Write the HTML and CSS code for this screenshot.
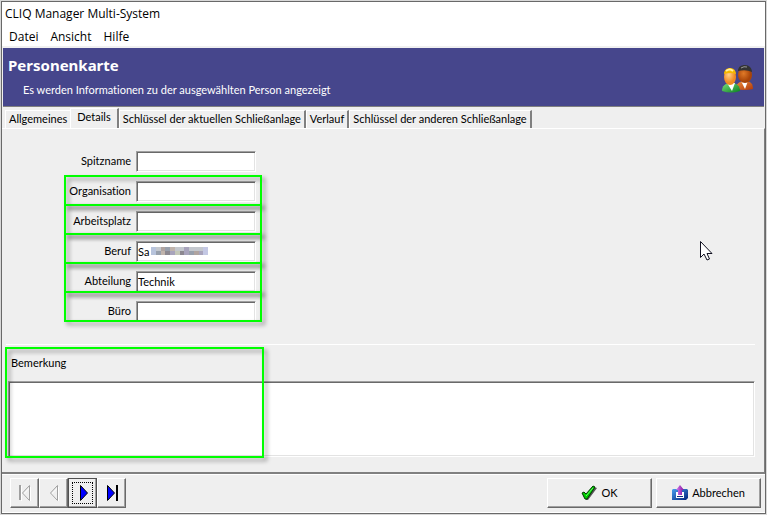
FILE: index.html
```html
<!DOCTYPE html>
<html lang="de">
<head>
    <meta charset="UTF-8">
    <meta name="viewport" content="width=device-width, initial-scale=1.0">
    <title>CLIQ Manager Multi-System</title>
    <link rel="stylesheet" href="styles.css">
</head>
<body>

<div class="window">
    <div class="title-bar">CLIQ Manager Multi-System</div>
    <nav class="menu-bar">
        <button type="button">Datei</button>
        <button type="button">Ansicht</button>
        <button type="button">Hilfe</button>
    </nav>

    <header class="banner">
        <div>
            <h1>Personenkarte</h1>
            <p>Es werden Informationen zu der ausgewählten Person angezeigt</p>
        </div>
        <svg class="people-icon" width="32" height="28" viewBox="0 0 32 28">
            <defs>
                <radialGradient id="skin" cx=".4" cy=".35"><stop offset="0" stop-color="#ffd08a"/><stop offset="1" stop-color="#f08a20"/></radialGradient>
                <radialGradient id="tan" cx=".4" cy=".4"><stop offset="0" stop-color="#e07a28"/><stop offset="1" stop-color="#a84408"/></radialGradient>
                <linearGradient id="green" x2="1" y2="1"><stop offset="0" stop-color="#7ce07c"/><stop offset="1" stop-color="#088020"/></linearGradient>
                <linearGradient id="orange" x2="1" y2="1"><stop offset="0" stop-color="#f09040"/><stop offset="1" stop-color="#b03808"/></linearGradient>
            </defs>
            <path d="M14 24c0-5 3-8 9-8s8 3 8 8q-8 2-17 0z" fill="url(#orange)"/>
            <path d="M19 16h7l-3 8z" fill="#fff"/>
            <ellipse cx="23" cy="10" rx="7" ry="8" fill="url(#tan)"/>
            <path d="M16 6c0-4 3-6 7-6s7 3 7 7q-6-3-14-1z" fill="#333"/>
            <path d="M19 3q3-2 6-1" stroke="#999" fill="none"/>
            <path d="M0 26c0-5 3-8 9-8s9 3 9 8q-9 3-18 0z" fill="url(#green)"/>
            <path d="M5 18h8l-3 8z" fill="#fff"/>
            <ellipse cx="8" cy="12" rx="6" ry="8" fill="url(#skin)"/>
            <path d="M2 9c0-4 3-6 6-6s6 2 6 6q-6-2-12 0z" fill="#f4b800"/>
            <path d="M4 6q4-3 7 0" stroke="#fff0a0" stroke-width="2" fill="none"/>
        </svg>
    </header>

    <div class="tabs" role="tablist">
        <button type="button" class="tab" role="tab">Allgemeines</button>
        <button type="button" class="tab active" role="tab" aria-selected="true">Details</button>
        <button type="button" class="tab" role="tab">Schlüssel der aktuellen Schließanlage</button>
        <button type="button" class="tab" role="tab">Verlauf</button>
        <button type="button" class="tab" role="tab">Schlüssel der anderen Schließanlage</button>
    </div>

    <main class="panel">
        <!-- Personal details -->
        <div class="fields">
            <div class="field">
                <label for="nickname">Spitzname</label>
                <input type="text" id="nickname">
            </div>
            <div class="field">
                <label for="organisation">Organisation</label>
                <input type="text" id="organisation">
            </div>
            <div class="field">
                <label for="workplace">Arbeitsplatz</label>
                <input type="text" id="workplace">
            </div>
            <div class="field">
                <label for="job">Beruf</label>
                <input type="text" id="job" value="Sa">
                <svg class="mosaic" width="57" height="8" viewBox="0 0 12 2" preserveAspectRatio="none" shape-rendering="crispEdges">
                    <path fill="#b8c4dc" d="M0 0h1v2H0z"/>
                    <path fill="#c4c8ce" d="M1 0h1v1H1zM5 0h2v1H5zM8 0h3v1H8z"/>
                    <path fill="#b0a4a0" d="M2 0h1v1H2zM9 1h1v1H9z"/>
                    <path fill="#98a0ac" d="M3 0h1v1H3zM1 1h1v1H1zM8 1h1v1H8z"/>
                    <path fill="#c0b4ac" d="M4 0h1v1H4zM2 1h1v1H2z"/>
                    <path fill="#8c8890" d="M3 1h1v1H3zM6 1h1v1H6z"/>
                    <path fill="#a8a4bc" d="M4 1h1v1H4zM7 0h1v2H7zM10 1h1v1h-1z"/>
                    <path fill="#c4c8b8" d="M5 1h1v1H5z"/>
                    <path fill="#c4c8e4" d="M11 0h1v2h-1z"/>
                </svg>
            </div>
            <div class="field">
                <label for="department">Abteilung</label>
                <input type="text" id="department" value="Technik">
            </div>
            <div class="field">
                <label for="office">Büro</label>
                <input type="text" id="office">
            </div>
            <!-- Green frames over the last five fields -->
            <div class="frames">
                <span class="frame"></span>
                <span class="frame"></span>
                <span class="frame"></span>
                <span class="frame"></span>
                <span class="frame"></span>
            </div>
        </div>

        <!-- Remarks -->
        <div class="remarks">
            <label for="remark">Bemerkung</label>
            <textarea id="remark"></textarea>
            <span class="frame remarks-frame"></span>
        </div>

        <svg class="pointer" width="13" height="20" viewBox="0 0 13 20">
            <path d="M.5 .5v16l3.500-3.500 3 6 2.500-1-2.500-5.500h5z" fill="#fff" stroke="#101020"/>
        </svg>
    </main>

    <footer class="footer">
        <div class="record-nav">
            <button type="button" aria-label="Erster" disabled>
                <svg width="16" height="18" viewBox="0 0 16 18"><path d="M4.500 2v15M13.500 3v14l-7-7z" stroke="#fff" fill="none"/><path d="M2 1h2v15H2z" fill="#a0a0a0"/><path d="M12.500 1.500v15L5.500 9z" stroke="#a0a0a0" fill="none"/></svg>
            </button>
            <button type="button" aria-label="Zurück" disabled>
                <svg width="16" height="18" viewBox="0 0 16 18"><path d="M12.500 3v14l-7-7z" stroke="#fff" fill="none"/><path d="M11.500 1.500v15L4.500 9z" stroke="#a0a0a0" fill="none"/></svg>
            </button>
            <button type="button" class="current" aria-label="Weiter">
                <svg width="16" height="18" viewBox="0 0 16 18"><path d="M5.500 1.500v15l7-7.500z" fill="#00f" stroke="#000"/></svg>
            </button>
            <button type="button" aria-label="Letzter">
                <svg width="16" height="18" viewBox="0 0 16 18"><path d="M3.500 1.500v15l7-7.500z" fill="#00f" stroke="#000"/><path d="M12 1h2v16h-2z"/></svg>
            </button>
        </div>
        <div class="actions">
            <button type="button">
                <svg width="16" height="16" viewBox="0 0 16 16"><path d="M2 8l3 1 7-8 3 1-9 12H4L1 9z" fill="#555" transform="translate(1 1)"/><path d="M1 8l2-1 2 2 7-8 2 1-8 12H4z" fill="#0c0" stroke="#043a04"/><path d="M5 11l7-8" stroke="#6f6"/></svg>
                OK
            </button>
            <button type="button">
                <svg width="16" height="16" viewBox="0 0 16 16"><defs><linearGradient id="box" x2="1" y2="1"><stop offset="0" stop-color="#48a0f0"/><stop offset="1" stop-color="#002078"/></linearGradient><linearGradient id="arrow" x2="1"><stop offset="0" stop-color="#d880f0"/><stop offset="1" stop-color="#8010a0"/></linearGradient></defs><path d="M1 4h14l1 1v8l-2 2H0V5z" fill="url(#box)"/><path d="M4 7h8v6H4z" fill="#fff"/><path d="M5 11h6v1H5z" fill="#103080"/><path d="M8 0l4 5h-2v5H6V5H4z" fill="url(#arrow)"/></svg>
                Abbrechen
            </button>
        </div>
    </footer>
</div>

</body>
</html>
```

FILE: styles.css
```css
* {
    box-sizing: border-box;
}
body {
    margin: 0;
    padding: 1px;
    background-color: #d8d8d8;
    font-family: Lato, Tahoma, sans-serif;
    font-size: 11px;
    line-height: 14px;
    font-variant-ligatures: none;
    color: #000;
}
button, input, textarea {
    font: inherit;
    font-variant-ligatures: none;
    color: inherit;
    margin: 0;
    border-radius: 0;
}
.window {
    display: flex;
    flex-direction: column;
    min-height: calc(100vh - 2px);
    border: 1px solid #696969;
    background-color: #efefef;
}
.title-bar, .menu-bar {
    font-family: "Open Sans", "Segoe UI", sans-serif;
    font-size: 12px;
    line-height: 22px;
    background-color: #fff;
}
.title-bar {
    height: 24px;
    padding: 1px 3px;
}
.menu-bar {
    display: flex;
    gap: 12px;
    height: 22px;
    padding: 0 7px;
    border-bottom: 2px solid #f0f0f0;
}
.menu-bar button {
    padding: 0;
    border: none;
    background: none;
}
.banner {
    display: flex;
    justify-content: space-between;
    align-items: center;
    height: 59px;
    padding: 0 10px 0 5px;
    margin: 0 1px;
    border-bottom: 1px solid #808080;
    background-color: #46468c;
    color: #fff;
}
.banner h1 {
    margin: 0 0 11px;
    font-family: "Noto Sans", sans-serif;
    font-size: 15px;
    line-height: 14px;
}
.banner p {
    margin: 0 0 0 15px;
}
.people-icon {
    margin-top: 4px;
}
.tabs {
    display: flex;
    align-items: flex-end;
    height: 21px;
    padding-left: 3px;
}
.tab {
    height: 18px;
    padding: 0 3px 2px;
    border: none;
    border-top: 1px solid #fff;
    border-left: 1px solid #fff;
    border-right: 2px solid #808080;
    background-color: #efefef;
    white-space: nowrap;
}
.tab:first-child {
    border-right: none;
}
.tab.active {
    height: 20px;
    padding: 0 6px 3px;
}
.panel {
    position: relative;
    flex: 1;
    padding: 17px 9px 0 4px;
    border-top: 1px solid #fff;
    border-right: 1px solid #808080;
    border-bottom: 2px solid #808080;
}
.fields {
    position: relative;
    width: 192px;
    margin-left: 58px;
}
.field {
    position: relative;
    display: grid;
    grid-template-columns: 67px 120px;
    gap: 5px;
    align-items: center;
    height: 30px;
}
.field label {
    text-align: right;
    white-space: nowrap;
}
.field input, .remarks textarea {
    border: 1px solid;
    border-color: #a0a0a0 #fff #fff #a0a0a0;
    box-shadow: inset 1px 1px #696969, inset -1px -1px #e3e3e3;
    background-color: #fff;
    outline: none;
}
.field input {
    width: 100%;
    height: 21px;
    padding: 1px 1px;
}
/* neighbouring frames share their 2px line */
.frames {
    position: absolute;
    top: 29px;
    right: -6px;
    left: 0;
    pointer-events: none;
}
.frame {
    display: block;
    height: 31px;
    border: 2px solid #0f0;
    filter: drop-shadow(3px 3px 2px rgba(0, 0, 0, 0.4));
}
.frame + .frame {
    margin-top: -2px;
}
.mosaic {
    position: absolute;
    top: 11px;
    left: 87px;
}
.remarks {
    position: relative;
    margin-top: 18px;
    padding: 11px 0 0 2px;
    border-top: 1px solid #fff;
}
.remarks-frame {
    position: absolute;
    top: 2px;
    bottom: -1px;
    left: -1px;
    width: 259px;
    height: auto;
    pointer-events: none;
}
.remarks label {
    display: block;
    margin: 0 0 11px 3px;
}
.remarks textarea {
    display: block;
    width: 100%;
    height: 76px;
    resize: none;
}
.pointer {
    position: absolute;
    top: 112px;
    right: 51px;
}
.footer {
    display: flex;
    justify-content: space-between;
    align-items: flex-start;
    height: 39px;
    padding: 3px 4px 0 8px;
    border-top: 1px solid #fff;
    border-bottom: 1px solid #fff;
}
.record-nav, .actions {
    display: flex;
}
.actions {
    gap: 4px;
}
.footer button {
    display: flex;
    justify-content: center;
    align-items: center;
    gap: 4px;
    height: 30px;
    padding: 0;
    border: 1px solid;
    border-color: #fff #696969 #696969 #fff;
    box-shadow: inset -1px -1px #a0a0a0;
    background-color: #efefef;
}
.record-nav button {
    width: 29px;
}
.footer .current {
    border-color: #505050;
    outline: 1px dotted #000;
    outline-offset: -5px;
}
.actions button {
    width: 105px;
}
```
